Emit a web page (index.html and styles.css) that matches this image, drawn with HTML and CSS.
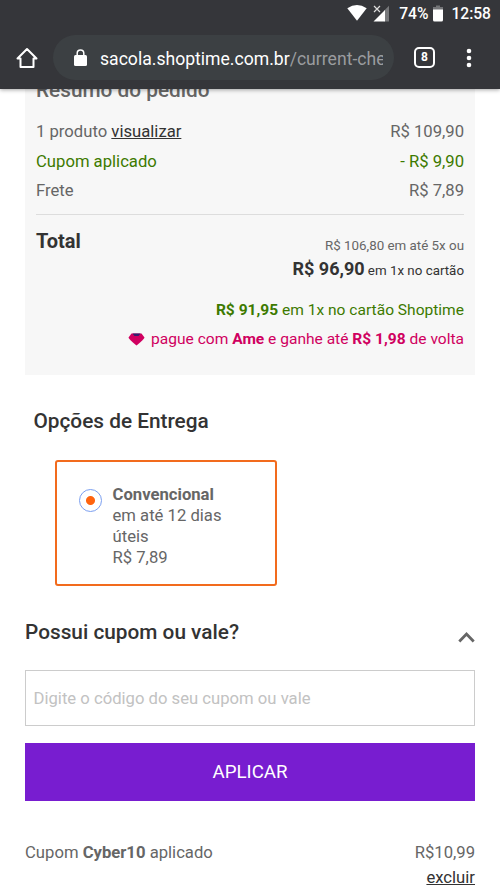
FILE: index.html
```html
<!DOCTYPE html>
<html lang="pt-BR">
<head>
<meta charset="utf-8">
<title>Shoptime</title>
<link rel="stylesheet" href="styles.css">
</head>
<body>
<header class="browser">
  <div class="status">
    <svg class="wifi" width="20" height="16" viewBox="0 0 20 16"><path d="M.3 3.2Q10-3 19.7 3.2L10 15.7Z" fill="#fff"/></svg>
    <svg class="signal" width="17" height="17" viewBox="0 0 17 17"><path d="M11.500 5.200 16 .7V16.500H11.500Z" fill="#77787b"/><path d="M.5 16.500 12 5V16.500Z" fill="#fff"/><path d="m1 1 6 6m0-6-6 6" stroke="#ddd" stroke-width="1.200"/></svg>
    <span class="battery-text">74%</span>
    <svg class="battery" width="10" height="17" viewBox="0 0 10 17"><path d="M3 .5h4V2h3v3H0V2h3Z" fill="#737477"/><path d="M0 4.500h10V15q0 1.500-1.500 1.500h-7Q0 16.500 0 15Z" fill="#fff"/></svg>
    <span class="clock">12:58</span>
  </div>
  <div class="toolbar">
    <svg class="home" width="22" height="22" viewBox="0 0 22 22" fill="none" stroke="#fff" stroke-width="2" stroke-linejoin="round"><path d="M1.500 11.500 11 2l9.500 9.500H17.500V20H4.500V11.500Z"/></svg>
    <div class="address">
      <svg class="lock" width="13" height="17" viewBox="0 0 13 17"><rect y="6" width="13" height="11" rx="1.500" fill="#fff"/><path d="M3.200 7V4.200a3.300 3.300 0 0 1 6.600 0V7" fill="none" stroke="#fff" stroke-width="1.500"/></svg>
      <div class="url">sacola.shoptime.com.br<span class="path">/current-che</span></div>
    </div>
    <div class="tabs">8</div>
    <svg class="more" width="6" height="20" viewBox="0 0 6 20" fill="#fff"><circle cx="3" cy="3" r="2.300"/><circle cx="3" cy="10" r="2.300"/><circle cx="3" cy="17" r="2.300"/></svg>
  </div>
</header>
<main>
  <section class="summary">
    <h2 class="summary-title">Resumo do pedido</h2>
    <div class="row"><span>1 produto <a class="link">visualizar</a></span><span>R$ 109,90</span></div>
    <div class="row green"><span>Cupom aplicado</span><span>- R$ 9,90</span></div>
    <div class="row"><span>Frete</span><span>R$ 7,89</span></div>
    <div class="total">
      <strong class="total-label">Total</strong>
      <div class="prices">
        <div class="installments">R$ 106,80 em até 5x ou</div>
        <div class="cash"><strong>R$ 96,90</strong> em 1x no cartão</div>
      </div>
    </div>
    <div class="store-card"><b>R$ 91,95</b> em 1x no cartão Shoptime</div>
    <div class="ame"><svg class="gem" width="17" height="13" viewBox="0 0 17 13"><path d="M3.500.5h10L16.500 4.500Q16.500 6 8.500 12.500.5 6 .5 4.500Z" fill="#d00060"/><path d="M4.500.5h8L10.500 3H6.500Z" fill="#30206f"/></svg><span>pague com <b>Ame</b> e ganhe até <b>R$ 1,98</b> de volta</span></div>
  </section>
  <section class="delivery">
    <h2 class="heading">Opções de Entrega</h2>
    <label class="option">
      <span class="radio"></span>
      <span class="option-text"><b>Convencional</b><br>em até 12 dias úteis<br>R$ 7,89</span>
    </label>
  </section>
  <section class="coupon">
    <div class="coupon-head">
      <h2 class="heading">Possui cupom ou vale?</h2>
      <svg class="chevron" width="17" height="11" viewBox="0 0 17 11"><path d="m1.300 9.500 7.200-7.400 7.200 7.400" fill="none" stroke="#666" stroke-width="2.800"/></svg>
    </div>
    <input class="code" type="text" placeholder="Digite o código do seu cupom ou vale">
    <button class="apply">APLICAR</button>
    <div class="applied">
      <span>Cupom <b>Cyber10</b> aplicado</span>
      <div class="applied-value">R$10,99<br><a class="link">excluir</a></div>
    </div>
  </section>
</main>
</body>
</html>
```
FILE: styles.css
```css
* { box-sizing: border-box; }
body { margin: 0; height: 889px; overflow: hidden; background: #fff; color: #666; font: 16.67px/21px Roboto, sans-serif; }
h2 { margin: 0; }
b, strong { font-weight: 700; }
svg { display: block; flex: none; }

.browser { position: relative; z-index: 1; height: 89px; background: #35363a; color: #fff; box-shadow: 0 1px 4px rgba(0,0,0,.35); }
.status { display: flex; align-items: center; justify-content: flex-end; height: 28px; padding: 1px 9px 0 0; font-size: 15.600px; font-weight: 500; }
.wifi { margin-top: -3px; }
.signal { margin: -2px 9px 0 6px; }
.battery { margin: -2px 8px 0 5px; }
.toolbar { display: flex; align-items: center; height: 61px; padding: 0 28px 2px 16px; }
.address { display: flex; align-items: center; width: 341px; height: 45px; margin-left: 15px; padding-left: 21px; border-radius: 23px; background: #3c4043; }
.url { width: 283px; margin: 2px 0 0 13px; overflow: hidden; white-space: nowrap; font-size: 17.600px; line-height: 26px; }
.path { color: #9a9c9f; }
.tabs { width: 21px; height: 21px; margin-left: 20px; border: 2px solid #fff; border-radius: 5px; font-size: 12px; line-height: 17px; font-weight: 700; text-align: center; }
.more { margin-left: auto; }

.summary { display: flow-root; height: 286px; margin: 0 25px; padding: 0 11px; background: #f7f7f7; }
.summary-title { height: 38px; margin: -11px 0 0; font-size: 20.8px; line-height: 24px; font-weight: 500; }
.row { display: flex; justify-content: space-between; height: 29.500px; line-height: 31px; }
.link { color: #333; text-decoration: underline; }
.green, .store-card { color: #3d7a00; }
.total { display: flex; justify-content: space-between; margin-top: 9px; padding-top: 15px; border-top: 1px solid #ddd; color: #333; }
.total-label { font-size: 20px; line-height: 23px; }
.prices { padding-top: 4px; text-align: right; font-size: 13.350px; }
.installments { color: #666; line-height: 23px; }
.cash { line-height: 24px; }
.cash strong { font-size: 18px; }
.store-card { margin-top: 15px; text-align: right; font-size: 15.550px; line-height: 24px; }
.ame { display: flex; align-items: center; justify-content: flex-end; gap: 6px; margin-top: 5px; color: #d00060; font-size: 15.550px; line-height: 24px; }
.gem { margin-top: 2px; }

.heading { color: #333; font-size: 20.800px; line-height: 26px; font-weight: 500; }
.delivery { padding: 33px 25px 0 33.500px; }
.option { display: flex; width: 222px; height: 126px; margin: 26px 0 0 21px; padding: 22px 30px 0 22px; border: 2px solid #f26b1d; border-radius: 3px; }
.radio { flex: none; width: 23px; height: 23px; margin: 5px 11px 0 0; border: 1px solid #7b9ff0; border-radius: 50%; background: radial-gradient(circle, #ff640f 4px, transparent 5px); }

.coupon { padding: 33px 25px 0; }
.coupon-head { display: flex; justify-content: space-between; align-items: center; }
.chevron { margin-top: 11px; }
.code { display: block; width: 100%; height: 56px; margin: 25px 0 16.500px; padding: 0 7.500px; border: 1px solid #ccc; background: #fff; font: 16.670px Roboto, sans-serif; }
.code::placeholder { color: #c2c2c2; }
.apply { display: block; width: 100%; height: 58.500px; padding: 0; border: 0; background: #781dd0; color: #fff; font: 18.700px Roboto, sans-serif; }
.applied { display: flex; justify-content: space-between; margin-top: 39px; line-height: 25px; }
.applied-value { text-align: right; }
```
